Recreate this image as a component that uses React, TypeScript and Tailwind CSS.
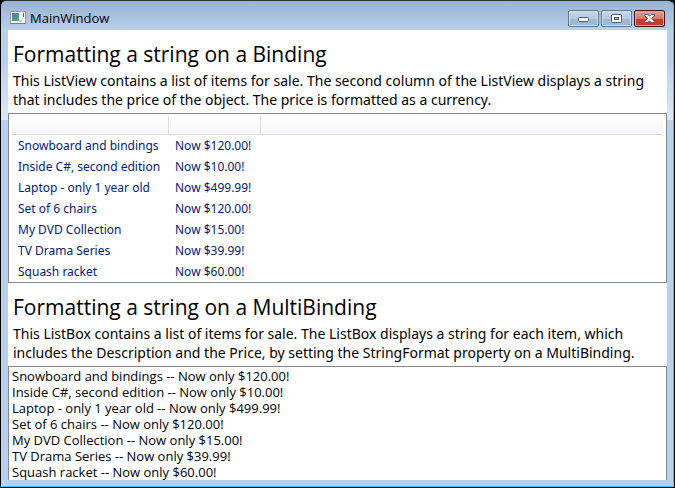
import type { ReactNode } from "react";

interface Item {
  description: string;
  price: number;
}

const items: Item[] = [
  { description: "Snowboard and bindings", price: 120 },
  { description: "Inside C#, second edition", price: 10 },
  { description: "Laptop - only 1 year old", price: 499.99 },
  { description: "Set of 6 chairs", price: 120 },
  { description: "My DVD Collection", price: 15 },
  { description: "TV Drama Series", price: 39.99 },
  { description: "Squash racket", price: 60 },
];

const currency = (value: number) => `$${value.toFixed(2)}`;

function AppIcon() {
  return (
    <svg width="16" height="14" viewBox="0 0 16 14" aria-hidden="true">
      <defs>
        <linearGradient id="app-pane" x1="0" y1="0" x2="1" y2="1">
          <stop offset="0" stopColor="#3f78a8" />
          <stop offset="1" stopColor="#5fb07c" />
        </linearGradient>
      </defs>
      <rect x="0.5" y="0.5" width="15" height="12" fill="#fbfbfb" stroke="#9a9a9a" />
      <path d="M0 12.5h16" stroke="#6f7f90" />
      <rect x="2" y="2" width="7" height="8" fill="url(#app-pane)" />
      <rect x="9" y="9" width="3" height="2" fill="#c8ccd0" />
      <rect x="13" y="2" width="1" height="4" fill="#3a6ea5" />
    </svg>
  );
}

function CaptionButton({ label, className, children }: { label: string; className: string; children: ReactNode }) {
  return (
    <button
      type="button"
      aria-label={label}
      className={`flex h-[17px] w-[31px] items-center justify-center rounded-[2px] border ${className}`}
    >
      {children}
    </button>
  );
}

const glass =
  "border-[#5f7893] bg-linear-to-b from-[#c5d8eb] from-0% via-[#b3cae2] via-50% to-[#b4cee8] shadow-[inset_0_0_0_1px_#cfdfef,inset_0_-7px_0_0_#9fb9d5]";
const red =
  "border-[#43141b] bg-linear-to-b from-[#e3a094] from-0% via-[#d4796a] via-50% to-[#cc5a45] shadow-[inset_0_0_0_1px_#e3a39a,inset_0_-7px_0_0_#bf3f27]";

function TitleBar() {
  return (
    <header className="flex h-7 shrink-0 items-start justify-between px-[2px]">
      <div className="flex items-center gap-1 pt-2">
        <AppIcon />
        <span className="text-[13px] leading-4">MainWindow</span>
      </div>
      <div className="flex gap-[2px] pt-2">
        <CaptionButton label="Minimize" className={glass}>
          <svg width="11" height="9" viewBox="0 0 11 9">
            <rect x="0.5" y="3.5" width="10" height="4" rx="1" fill="#fff" stroke="#535666" />
          </svg>
        </CaptionButton>
        <CaptionButton label="Maximize" className={glass}>
          <svg width="11" height="9" viewBox="0 0 11 9">
            <rect x="0.5" y="0.5" width="10" height="8" rx="1" fill="#fff" stroke="#535666" />
            <rect x="3.5" y="3.5" width="4" height="2" fill="#9db7d3" stroke="#535666" />
          </svg>
        </CaptionButton>
        <CaptionButton label="Close" className={red}>
          <svg width="13" height="9" viewBox="0 0 13 9">
            <path
              d="M1.5 0.5H4.8L6.5 2.2L8.2 0.5H11.5V1.5L8.6 4.5L11.5 7.5V8.5H8.2L6.5 6.8L4.8 8.5H1.5V7.5L4.4 4.5L1.5 1.5Z"
              fill="#fff"
              stroke="#535666"
            />
          </svg>
        </CaptionButton>
      </div>
    </header>
  );
}

function Intro({ title, children }: { title: string; children: ReactNode }) {
  return (
    <div className="px-[5px] pt-[10px] pb-1">
      <h1 className="mb-[3px] text-[21px] leading-7">{title}</h1>
      <p className="font-['Noto_Sans',sans-serif] text-sm leading-[19px]">{children}</p>
    </div>
  );
}

function ListView() {
  return (
    <div className="border border-[#828790] px-[3px] pt-[2px]">
      <table className="w-full table-fixed border-collapse text-left font-['Noto_Sans',sans-serif] text-xs text-[#042271]">
        <colgroup>
          <col className="w-[156px]" />
          <col className="w-[92px]" />
          <col />
        </colgroup>
        <thead>
          <tr className="h-[18px] border-b border-[#d5d5d5] bg-linear-to-b from-white to-[#f5f6f7]">
            <th aria-label="Description" className="border-r border-[#dfdfdf] p-0" />
            <th aria-label="Price" className="border-r border-[#dfdfdf] p-0" />
            <th aria-hidden="true" className="p-0" />
          </tr>
        </thead>
        <tbody>
          {items.map((item) => (
            <tr key={item.description} className="leading-[21px] whitespace-nowrap">
              <td className="p-0 pl-[6px]">{item.description}</td>
              <td className="p-0 pl-[7px]">{`Now ${currency(item.price)}!`}</td>
              <td className="p-0" />
            </tr>
          ))}
        </tbody>
      </table>
    </div>
  );
}

function ListBox() {
  return (
    <ul className="border border-[#828790] px-[3px] pt-px text-[13px] leading-4">
      {items.map((item) => (
        <li key={item.description}>{`${item.description} -- Now only ${currency(item.price)}!`}</li>
      ))}
    </ul>
  );
}

export default function App() {
  return (
    <div className="h-screen bg-black pr-px pb-px font-['Open_Sans','Noto_Sans',sans-serif] text-black">
      <div className="flex h-full flex-col overflow-hidden rounded-t-md border border-t-[#2f333b] border-r-[#35d3ea] border-b-[#35d3ea] border-l-black bg-[linear-gradient(#98b3d1_0,#b9d1ea_30px,#b9d1ea_60px,#dce8f5_119px,#b9d1ea_119px)] pt-px pr-[6px] pb-[6px] pl-[7px]">
        <TitleBar />
        <main className="min-h-0 flex-1 overflow-hidden bg-white">
          <Intro title="Formatting a string on a Binding">
            This ListView contains a list of items for sale. The second column of the ListView displays a string
            that includes the price of the object. The price is formatted as a currency.
          </Intro>
          <ListView />
          <Intro title="Formatting a string on a MultiBinding">
            This ListBox contains a list of items for sale. The ListBox displays a string for each item, which
            includes the Description and the Price, by setting the StringFormat property on a MultiBinding.
          </Intro>
          <ListBox />
        </main>
      </div>
    </div>
  );
}
